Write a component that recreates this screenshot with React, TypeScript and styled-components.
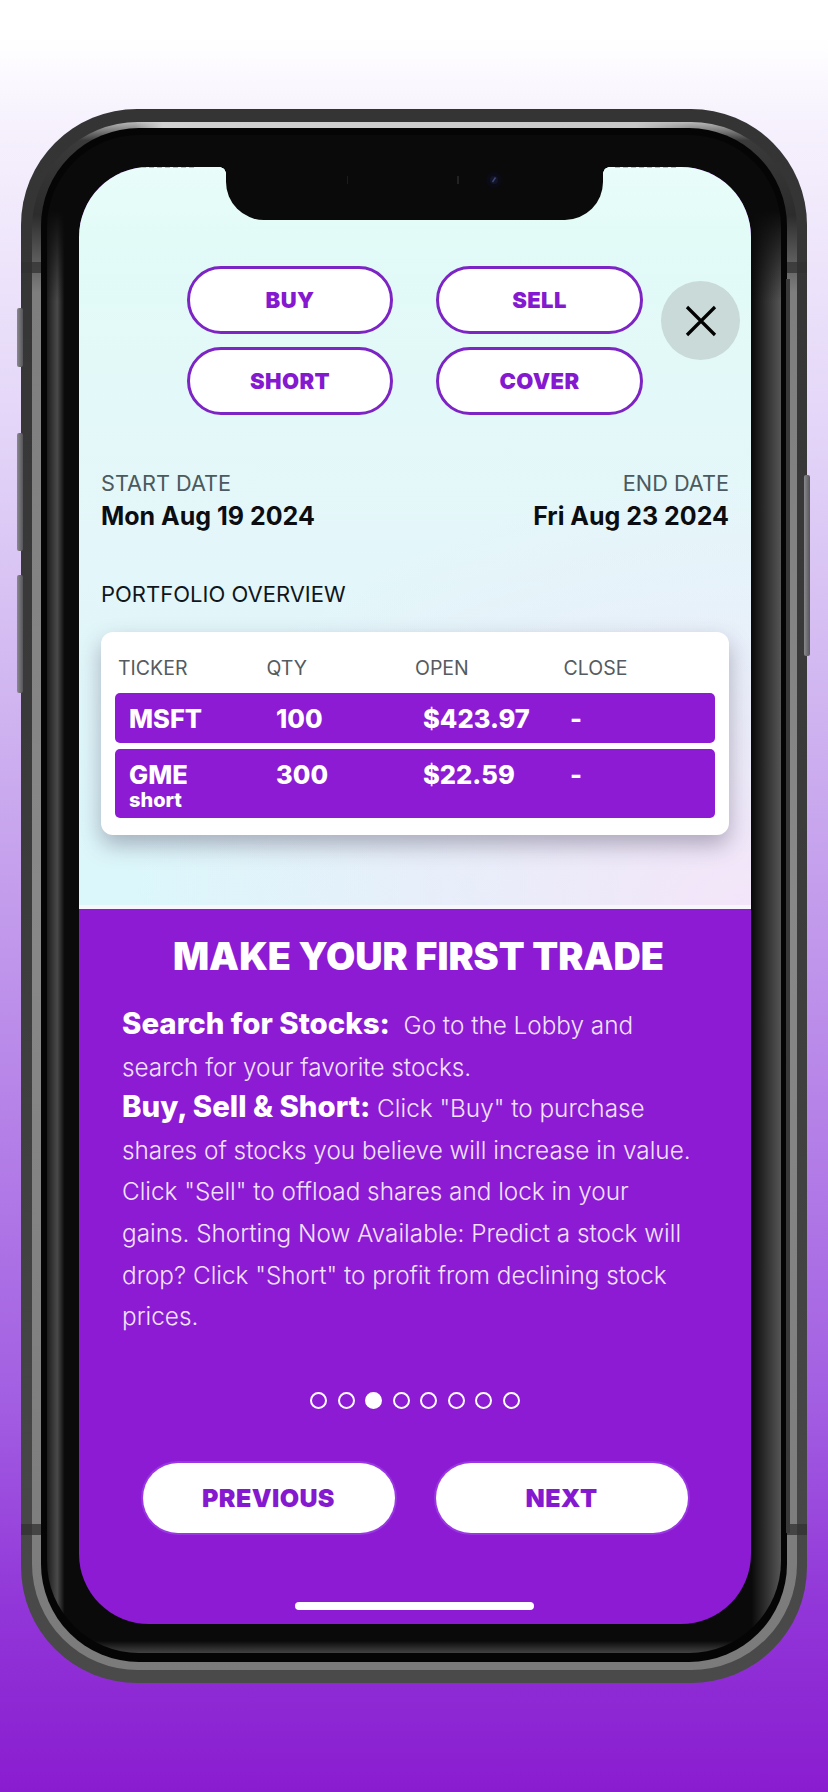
import React from "react";
import styled, { createGlobalStyle } from "styled-components";

const Global = createGlobalStyle`
  html, body { margin: 0; padding: 0; }
  body { font-family: Inter, "Liberation Sans", sans-serif; }
  * { box-sizing: border-box; }
`;

const Page = styled.main`
  width: 828px;
  height: 1792px;
  overflow: hidden;
  padding: 109px 21px 0;
  background: linear-gradient(180deg, #ffffff 2%, #f6f1fd 7%, #e3d5f8 24%, #cfb3f0 40%, #a35fe2 78%, #9135d8 90%, #8a1cd0 100%);
`;

const Phone = styled.div`
  position: relative;
  width: 786px;
  height: 1574px;
  padding: 13px 10px 13px 11px;
  border-radius: 116px;
  background: linear-gradient(180deg, #343434 0%, #3c3c3c 50%, #4a4a4a 100%);
`;

const Rim = styled.div`
  height: 100%;
  padding: 6px 10px 8px 9px;
  border-radius: 106px;
  background: linear-gradient(180deg, #b9b9b9 0, #3a3a3a 1.2%, #2c2c2c 6%, #7e7e7e 11%, #888 50%, #7b7b7b 100%);
`;

const Inner = styled.div`
  height: 100%;
  padding: 7px 6px 9px;
  border-radius: 98px;
  background: #050505;
`;

const Bezel = styled.div`
  height: 100%;
  padding: 32px 30px 29px 32px;
  border-radius: 92px;
  background:
    linear-gradient(180deg, #0a0a0a 5%, rgba(10, 10, 10, 0) 11%),
    linear-gradient(180deg, transparent 99.2%, rgba(90, 90, 90, 0.7) 100%),
    linear-gradient(90deg, #1c1c1c 0, #4a4a4a 1.4%, #0a0a0a 2.4%, #0a0a0a 96%, #565656 100%);
`;

const Screen = styled.div`
  position: relative;
  display: flex;
  flex-direction: column;
  height: 100%;
  overflow: hidden;
  border-radius: 70px;
  background: #8c1bd3;
`;

const TopPane = styled.section`
  height: 742px;
  padding: 99px 22px 0;
  background:
    radial-gradient(ellipse 620px 420px at 100% 100%, #f4e5f9 0%, rgba(240, 230, 250, 0) 100%),
    linear-gradient(180deg, #e9fdfa 0%, #e2fbf7 10%, #e4f6f9 50%, #dbf7fb 100%);
  border-bottom: 4px solid #f6f6fb;
`;

const ActionGrid = styled.div`
  display: grid;
  grid-template-columns: 206px 207px;
  grid-auto-rows: 68px;
  gap: 13px 43px;
  justify-content: center;
`;

const ActionButton = styled.button`
  border: 3px solid #7d24c4;
  border-radius: 34px;
  background: #ffffff;
  color: #8519cf;
  font: 900 22px Inter, sans-serif;
  letter-spacing: 0.4px;
  padding: 0;
`;

const DateRow = styled.div`
  display: flex;
  justify-content: space-between;
  margin-top: 53px;
`;

const DateBlock = styled.div<{ $right?: boolean }>`
  text-align: ${(p) => (p.$right ? "right" : "left")};
`;

const DateLabel = styled.div`
  font-size: 21.7px;
  line-height: 30px;
  color: #4a5a60;
`;

const DateValue = styled.div`
  font-size: 25px;
  font-weight: 700;
  line-height: 36px;
  color: #0b0d12;
`;

const SectionLabel = styled.h2`
  margin: 45px 0 0;
  font-size: 22px;
  font-weight: 400;
  line-height: 30px;
  color: #10161c;
`;

const Card = styled.div`
  margin-top: 23px;
  height: 203px;
  padding: 24px 14px 0;
  border-radius: 12px;
  background: #ffffff;
  box-shadow: 0 10px 22px rgba(70, 60, 90, 0.38);
`;

const HeadRow = styled.div`
  display: grid;
  grid-template-columns: repeat(4, 148.5px);
  padding-left: 3px;
  height: 37px;
  font-size: 19.5px;
  line-height: 24px;
  color: #555b60;
`;

const DataRow = styled.div<{ $tall?: boolean }>`
  display: grid;
  grid-template-columns: repeat(4, 147px);
  height: ${(p) => (p.$tall ? "69px" : "50px")};
  margin-bottom: 6px;
  padding: 12px 0 0 14px;
  border-radius: 5px;
  background: #8c1bd3;
  color: #ffffff;
  font-size: 25.5px;
  font-weight: 800;
  line-height: 28px;
`;

const Sub = styled.div`
  font-size: 20px;
  line-height: 22px;
  font-weight: 800;
`;

const BottomPane = styled.section`
  flex: 1;
  padding: 24px 0 0;
`;

const Title = styled.h1`
  margin: 0;
  padding-left: 7px;
  text-align: center;
  color: #ffffff;
  font-size: 37.8px;
  font-weight: 900;
  line-height: 46px;
`;

const Body = styled.p`
  margin: 26px 54px 0 43px;
  color: #f1e2fb;
  font-size: 24.3px;
  font-weight: 300;
  line-height: 41.6px;
`;

const Strong = styled.strong`
  color: #ffffff;
  font-size: 29.4px;
  font-weight: 800;
  line-height: 0;
`;

const Dots = styled.div`
  display: flex;
  justify-content: center;
  gap: 10.5px;
  margin-top: 54px;
`;

const Dot = styled.span<{ $active?: boolean }>`
  width: 17px;
  height: 17px;
  border-radius: 50%;
  border: 2px solid #ffffff;
  background: ${(p) => (p.$active ? "#ffffff" : "transparent")};
`;

const NavRow = styled.div`
  display: flex;
  justify-content: center;
  gap: 41px;
  margin-top: 54px;
`;

const NavButton = styled.button`
  width: 252px;
  height: 70px;
  padding: 0;
  border: none;
  border-radius: 35px;
  background: #ffffff;
  box-shadow: 0 0 0 2px #9a36e2;
  color: #8519cf;
  font: 900 25px Inter, sans-serif;
  letter-spacing: 0.4px;
`;

const HomeBar = styled.div`
  position: absolute;
  left: 216px;
  bottom: 14px;
  width: 239px;
  height: 8px;
  border-radius: 4px;
  background: #ffffff;
`;

const Notch = styled.div`
  position: absolute;
  top: 0;
  left: 147px;
  width: 377px;
  height: 53px;
  border-radius: 0 0 38px 38px;
  background: #0a0a0a;
  &::before,
  &::after {
    content: "";
    position: absolute;
    top: 0;
    width: 6px;
    height: 6px;
  }
  &::before {
    left: -6px;
    background: radial-gradient(circle at 0 100%, transparent 5.5px, #0a0a0a 6px);
  }
  &::after {
    right: -6px;
    background: radial-gradient(circle at 100% 100%, transparent 5.5px, #0a0a0a 6px);
  }
`;

const Camera = styled.svg`
  position: absolute;
  top: 3px;
  left: 130px;
  width: 170px;
  height: 20px;
  overflow: visible;
`;

const StatusRemnant = styled.div<{ $side: "left" | "right" }>`
  position: absolute;
  top: 0;
  ${(p) => (p.$side === "left" ? "left: 54px;" : "right: 72px;")}
  width: 64px;
  height: 1px;
  background: repeating-linear-gradient(90deg, #b8b8b8 0 5px, transparent 5px 8px);
`;

const CloseButton = styled.button`
  position: absolute;
  top: 114px;
  left: 582px;
  display: flex;
  align-items: center;
  justify-content: center;
  width: 79px;
  height: 79px;
  padding: 0;
  border: none;
  border-radius: 50%;
  background: #c9dad8;
`;

const SideKey = styled.div<{ $top: number; $height: number; $right?: boolean }>`
  position: absolute;
  top: ${(p) => p.$top}px;
  ${(p) => (p.$right ? "right: -3px;" : "left: -4px;")}
  width: 6px;
  height: ${(p) => p.$height}px;
  border-radius: 2px;
  background: linear-gradient(90deg, #8a8a8e, #55555a);
`;

const Highlight = styled.div`
  position: absolute;
  top: 13px;
  left: 114px;
  width: 556px;
  height: 6px;
  border-radius: 3px;
  background: linear-gradient(90deg, transparent 0, #d2d2d2 5%, #c8c8c8 90%, transparent 100%);
`;

const Band = styled.div<{ $top: number; $side: "left" | "right" }>`
  position: absolute;
  top: ${(p) => p.$top}px;
  ${(p) => (p.$side === "left" ? "left: 0;" : "right: 0;")}
  width: 20px;
  height: 11px;
  background: rgba(50, 50, 50, 0.75);
`;

const RightStripe = styled.div`
  position: absolute;
  top: 170px;
  bottom: 150px;
  right: 17px;
  width: 4px;
  background: #3a3a3a;
`;

const dots = [0, 1, 2, 3, 4, 5, 6, 7];

export default function App() {
  return (
    <Page>
      <Global />
      <Phone>
        <SideKey $top={199} $height={59} />
        <SideKey $top={324} $height={118} />
        <SideKey $top={466} $height={118} />
        <SideKey $top={366} $height={181} $right />
        <Rim>
          <Inner>
            <Bezel>
              <Screen>
                <TopPane>
                  <ActionGrid>
                    <ActionButton>BUY</ActionButton>
                    <ActionButton>SELL</ActionButton>
                    <ActionButton>SHORT</ActionButton>
                    <ActionButton>COVER</ActionButton>
                  </ActionGrid>
                  <DateRow>
                    <DateBlock>
                      <DateLabel>START DATE</DateLabel>
                      <DateValue>Mon Aug 19 2024</DateValue>
                    </DateBlock>
                    <DateBlock $right>
                      <DateLabel>END DATE</DateLabel>
                      <DateValue>Fri Aug 23 2024</DateValue>
                    </DateBlock>
                  </DateRow>
                  <SectionLabel>PORTFOLIO OVERVIEW</SectionLabel>
                  <Card>
                    <HeadRow>
                      <span>TICKER</span>
                      <span>QTY</span>
                      <span>OPEN</span>
                      <span>CLOSE</span>
                    </HeadRow>
                    <DataRow>
                      <span>MSFT</span>
                      <span>100</span>
                      <span>$423.97</span>
                      <span>-</span>
                    </DataRow>
                    <DataRow $tall>
                      <span>
                        GME
                        <Sub>short</Sub>
                      </span>
                      <span>300</span>
                      <span>$22.59</span>
                      <span>-</span>
                    </DataRow>
                  </Card>
                </TopPane>
                <BottomPane>
                  <Title>MAKE YOUR FIRST TRADE</Title>
                  <Body>
                    <Strong>Search for Stocks:</Strong>&nbsp; Go to the Lobby and search for your favorite stocks.
                    <br />
                    <Strong>Buy, Sell &amp; Short:</Strong> Click "Buy" to purchase shares of stocks you believe will
                    increase in value. Click "Sell" to offload shares and lock in your gains. Shorting Now Available:
                    Predict a stock will drop? Click "Short" to profit from declining stock prices.
                  </Body>
                  <Dots>
                    {dots.map((d) => (
                      <Dot key={d} $active={d === 2} />
                    ))}
                  </Dots>
                  <NavRow>
                    <NavButton>PREVIOUS</NavButton>
                    <NavButton>NEXT</NavButton>
                  </NavRow>
                </BottomPane>
                <HomeBar />
                <StatusRemnant $side="left" />
                <StatusRemnant $side="right" />
                <Notch>
                  <Camera viewBox="0 0 170 20">
                    <rect x="-9" y="6" width="1" height="8" fill="#1c1c1c" />
                    <rect x="101" y="6" width="2" height="8" fill="#222" />
                    <circle cx="138" cy="10" r="8" fill="#0b0b16" />
                    <circle cx="138" cy="10" r="4" fill="#141428" />
                    <path d="M139.5 7.5 L136.5 12" stroke="#3c4a78" strokeWidth="1.4" />
                  </Camera>
                </Notch>
                <CloseButton aria-label="Close">
                  <svg width="32" height="32" viewBox="0 0 32 32" fill="none" stroke="#000" strokeWidth="3.2">
                    <path d="M2 2 L30 30 M30 2 L2 30" />
                  </svg>
                </CloseButton>
              </Screen>
            </Bezel>
          </Inner>
        </Rim>
        <Highlight />
        <Band $top={153} $side="left" />
        <Band $top={153} $side="right" />
        <Band $top={1415} $side="left" />
        <Band $top={1415} $side="right" />
        <RightStripe />
      </Phone>
    </Page>
  );
}
